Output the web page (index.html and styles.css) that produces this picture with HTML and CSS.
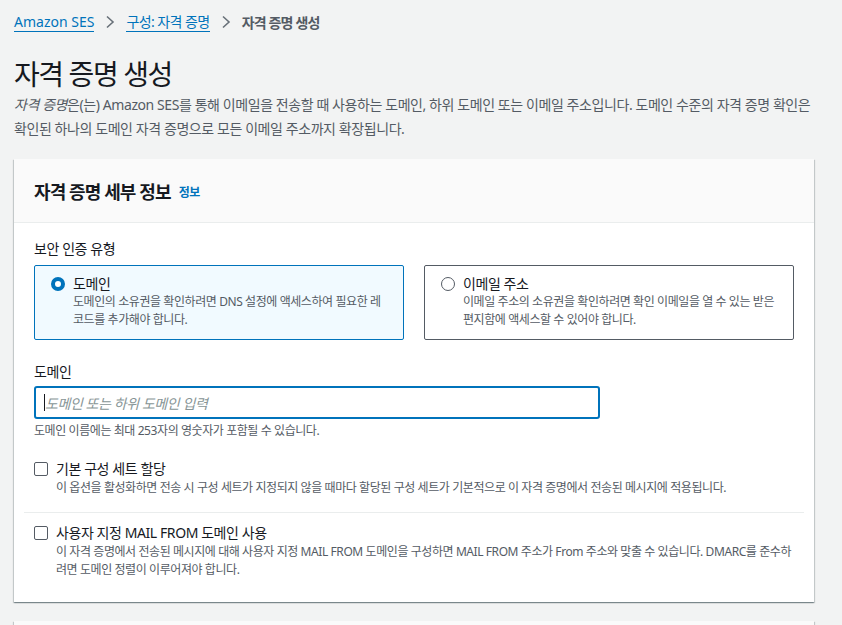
FILE: index.html
```html
<!DOCTYPE html>
<html lang="ko">
<head>
<meta charset="utf-8">
<title>자격 증명 생성</title>
<link rel="stylesheet" href="styles.css">
</head>
<body>

<nav class="crumbs">
  <a href="#">Amazon SES</a>
  <span class="sep"><svg width="10" height="14" viewBox="0 0 10 14"><path d="M2 1.5 L8 7 L2 12.5" /></svg></span>
  <a href="#">구성: 자격 증명</a>
  <span class="sep"><svg width="10" height="14" viewBox="0 0 10 14"><path d="M2 1.5 L8 7 L2 12.5" /></svg></span>
  <span class="current">자격 증명 생성</span>
</nav>

<h1>자격 증명 생성</h1>
<p class="intro"><i>자격 증명</i>은(는) Amazon SES를 통해 이메일을 전송할 때 사용하는 도메인, 하위 도메인 또는 이메일 주소입니다. 도메인 수준의 자격 증명 확인은 확인된 하나의 도메인 자격 증명으로 모든 이메일 주소까지 확장됩니다.</p>

<section class="card">
  <div class="card-head">
    <h2>자격 증명 세부 정보</h2>
    <a class="info" href="#">정보</a>
  </div>
  <div class="card-body">
    <div class="label">보안 인증 유형</div>
    <div class="tiles">
      <div class="tile on">
        <span class="radio"></span>
        <div>
          <div class="tile-title">도메인</div>
          <div class="tile-desc">도메인의 소유권을 확인하려면 DNS 설정에 액세스하여 필요한 레코드를 추가해야 합니다.</div>
        </div>
      </div>
      <div class="tile">
        <span class="radio"></span>
        <div>
          <div class="tile-title">이메일 주소</div>
          <div class="tile-desc">이메일 주소의 소유권을 확인하려면 확인 이메일을 열 수 있는 받은 편지함에 액세스할 수 있어야 합니다.</div>
        </div>
      </div>
    </div>

    <div class="label domain-label">도메인</div>
    <div class="input"><span class="caret"></span><span class="ph">도메인 또는 하위 도메인 입력</span></div>
    <div class="hint">도메인 이름에는 최대 253자의 영숫자가 포함될 수 있습니다.</div>

    <div class="check">
      <span class="box"></span>
      <div>
        <div class="check-title">기본 구성 세트 할당</div>
        <div class="check-desc">이 옵션을 활성화하면 전송 시 구성 세트가 지정되지 않을 때마다 할당된 구성 세트가 기본적으로 이 자격 증명에서 전송된 메시지에 적용됩니다.</div>
      </div>
    </div>
    <hr>
    <div class="check after-rule">
      <span class="box"></span>
      <div>
        <div class="check-title">사용자 지정 MAIL FROM 도메인 사용</div>
        <div class="check-desc">이 자격 증명에서 전송된 메시지에 대해 사용자 지정 MAIL FROM 도메인을 구성하면 MAIL FROM 주소가 From 주소와 맞출 수 있습니다. DMARC를 준수하려면 도메인 정렬이 이루어져야 합니다.</div>
      </div>
    </div>
  </div>
</section>

<section class="card next"></section>

</body>
</html>
```

FILE: styles.css
```css
*{box-sizing:border-box;}
html,body,h1,h2,p,hr{margin:0;padding:0;}
body{
  background:#f2f3f3;
  color:#16191f;
  font-family:"Noto Sans","Noto Sans CJK KR",sans-serif;
  font-size:14px;
  letter-spacing:-0.03em;
  padding:11px 28px 0 14px;
  overflow:hidden;
}
a{color:#0073bb;text-decoration:none;}

.crumbs{display:flex;align-items:center;height:22px;font-size:14px;letter-spacing:0;}
.crumbs a{border-bottom:1px solid #0073bb;line-height:19px;}
.crumbs a + .sep + a{letter-spacing:-0.04em;}
.sep{width:32px;display:flex;justify-content:center;}
.sep path{fill:none;stroke:#687078;stroke-width:1.6;}
.current{color:#545b64;font-weight:bold;letter-spacing:-0.06em;}

h1{font-size:28px;font-weight:normal;line-height:36px;margin:23px 0 1px 0;letter-spacing:-0.05em;}
.intro{color:#545b64;line-height:24px;word-break:keep-all;}

.card{
  margin-top:18px;
  background:#fff;
  box-shadow:0 1px 1px 0 rgba(0,28,36,0.3),1px 1px 1px 0 rgba(0,28,36,0.15),-1px 1px 1px 0 rgba(0,28,36,0.15);
}
.card-head{
  background:#fafafa;
  border-bottom:1px solid #eaeded;
  height:64px;
  padding:0 20px;
  display:flex;
  align-items:center;
  gap:8px;
}
h2{font-size:18px;font-weight:bold;letter-spacing:-0.05em;}
.info{font-size:12px;font-weight:bold;padding-top:3px;}
.card-body{padding:16px 20px 23px 20px;}

.label{line-height:20px;margin-bottom:6px;}
.tiles{display:grid;grid-template-columns:1fr 1fr;gap:20px;}
.tile{
  display:flex;
  gap:8px;
  height:75px;
  border:1px solid #545b64;
  border-radius:2px;
  padding:9px 16px 0 16px;
}
.tile.on{border-color:#0073bb;background:#f1faff;}
.radio{
  flex:none;
  width:14px;height:14px;
  margin-top:2px;
  border:1px solid #545b64;
  border-radius:50%;
}
.tile.on .radio{border:4px solid #0073bb;background:#fff;}
.tile-title{line-height:18px;}
.tile-desc{font-size:12px;color:#545b64;line-height:18px;word-break:break-all;}

.domain-label{margin-top:22px;margin-bottom:4px;}
.input{
  width:566px;
  height:33px;
  border:2px solid #0073bb;
  border-radius:3px;
  display:flex;
  align-items:center;
  padding:0 8px;
}
.caret{width:1px;height:17px;background:#16191f;}
.ph{color:#879596;font-style:italic;}
.hint{font-size:12px;color:#545b64;line-height:16px;margin-top:4px;}

.check{display:flex;gap:8px;margin-top:20px;}
.check.after-rule{margin-top:10px;}
.box{
  flex:none;
  width:14px;height:14px;
  margin-top:3px;
  border:1px solid #545b64;
  border-radius:2px;
  background:#fff;
}
.check-title{line-height:20px;}
.check-desc{font-size:12px;color:#545b64;line-height:18px;word-break:break-all;}
hr{border:0;border-top:1px solid #eaeded;margin:15px -10px 0 -10px;}

.card.next{margin-top:19px;height:40px;background:#fafafa;}
```
